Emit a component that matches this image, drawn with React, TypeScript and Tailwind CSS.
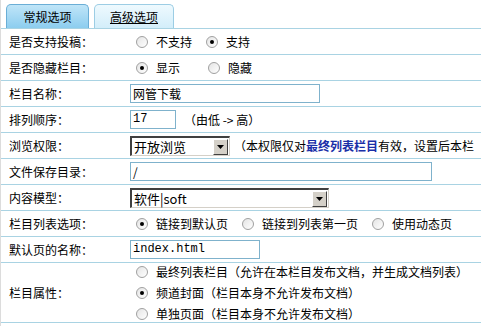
import type { ReactNode } from "react";

function Radio({ checked }: { checked?: boolean }) {
  return (
    <span className="inline-flex items-center justify-center w-[12px] h-[12px] rounded-full border border-[#a0a0a0] bg-gradient-to-br from-[#e4e4e4] to-white shrink-0">
      {checked && <span className="w-[4px] h-[4px] rounded-full bg-black" />}
    </span>
  );
}

function Opt({ checked, children, gap = "mr-[14px]" }: { checked?: boolean; children: ReactNode; gap?: string }) {
  return (
    <span className={`inline-flex items-center ${gap}`}>
      <Radio checked={checked} />
      <span className="ml-[8px]">{children}</span>
    </span>
  );
}

function Select({ value, width }: { value: string; width: string }) {
  return (
    <div className={`flex h-[20px] ${width} border-t-2 border-l-2 border-t-[#404040] border-l-[#404040] border-b border-r border-b-[#d4d0c8] border-r-[#d4d0c8] bg-white`}>
      <span className="flex-1 px-[2px] leading-[17px] text-[13px]">{value}</span>
      <span className="w-[15px] h-[16px] mt-[1px] mr-[1px] bg-[#d4d0c8] border border-t-white border-l-white border-b-[#404040] border-r-[#404040] flex items-center justify-center">
        <svg width="7" height="4" viewBox="0 0 7 4"><path d="M0 0h7L3.5 4z" fill="#000" /></svg>
      </span>
    </div>
  );
}

function Input({ value, width, mono }: { value: string; width: string; mono?: boolean }) {
  return (
    <div className={`h-[19px] ${width} border border-[#7fb2cc] bg-white px-[2px] leading-[17px] ${mono ? "font-['Liberation_Mono',monospace] text-[12px]" : ""}`}>
      {value}
    </div>
  );
}

function Row({ label, children, tall }: { label: string; children: ReactNode; tall?: boolean }) {
  return (
    <div className={`flex items-center border-b border-[#a9d3e3] ${tall ? "h-[60px]" : "h-[26px]"}`}>
      <div className="w-[129px] pl-[8px] shrink-0">{label}</div>
      <div className="flex items-center flex-1 whitespace-nowrap overflow-hidden">{children}</div>
    </div>
  );
}

export default function App() {
  return (
    <div className="w-[481px] h-[326px] overflow-hidden bg-white text-[12px] text-black font-['Noto_Sans_CJK_SC','Noto_Sans',sans-serif] border-l border-[#dcdcdc]">
      <div className="flex items-end h-[29px] pl-[5px] gap-[5px] border-b border-[#a9d3e3]">
        <div className="w-[83px] h-[24px] rounded-t-[5px] border border-b-0 border-[#6aaed6] bg-gradient-to-b from-[#bfe5f8] to-[#8ccdef] flex items-center justify-center">
          常规选项
        </div>
        <div className="w-[80px] h-[24px] rounded-t-[5px] border border-b-0 border-[#9ccde4] bg-gradient-to-b from-[#eef9fe] to-[#d3eefa] flex items-center justify-center underline">
          高级选项
        </div>
      </div>

      <Row label="是否支持投稿：">
        <span className="pl-[6px] flex items-center">
          <Opt>不支持</Opt>
          <Opt checked>支持</Opt>
        </span>
      </Row>
      <Row label="是否隐藏栏目：">
        <span className="pl-[6px] flex items-center">
          <Opt checked gap="mr-[28px]">显示</Opt>
          <Opt>隐藏</Opt>
        </span>
      </Row>
      <Row label="栏目名称：">
        <Input value="网管下载" width="w-[190px]" />
      </Row>
      <Row label="排列顺序：">
        <Input value="17" width="w-[46px]" mono />
        <span className="ml-[8px]">（由低 -&gt; 高）</span>
      </Row>
      <Row label="浏览权限：">
        <Select value="开放浏览" width="w-[100px]" />
        <span className="ml-[4px]">
          （本权限仅对<b className="text-[#1a2fa8]">最终列表栏目</b>有效，设置后本栏
        </span>
      </Row>
      <Row label="文件保存目录：">
        <Input value="/" width="w-[302px]" />
      </Row>
      <Row label="内容模型：">
        <Select value="软件|soft" width="w-[199px]" />
      </Row>
      <Row label="栏目列表选项：">
        <span className="pl-[6px] flex items-center">
          <Opt checked gap="mr-[14px]">链接到默认页</Opt>
          <Opt gap="mr-[14px]">链接到列表第一页</Opt>
          <Opt>使用动态页</Opt>
        </span>
      </Row>
      <Row label="默认页的名称：">
        <Input value="index.html" width="w-[130px]" mono />
      </Row>
      <Row label="栏目属性：" tall>
        <div className="pl-[6px] flex flex-col gap-[3px]">
          <Opt>最终列表栏目（允许在本栏目发布文档，并生成文档列表）</Opt>
          <Opt checked>频道封面（栏目本身不允许发布文档）</Opt>
          <Opt>单独页面（栏目本身不允许发布文档）</Opt>
        </div>
      </Row>
    </div>
  );
}
